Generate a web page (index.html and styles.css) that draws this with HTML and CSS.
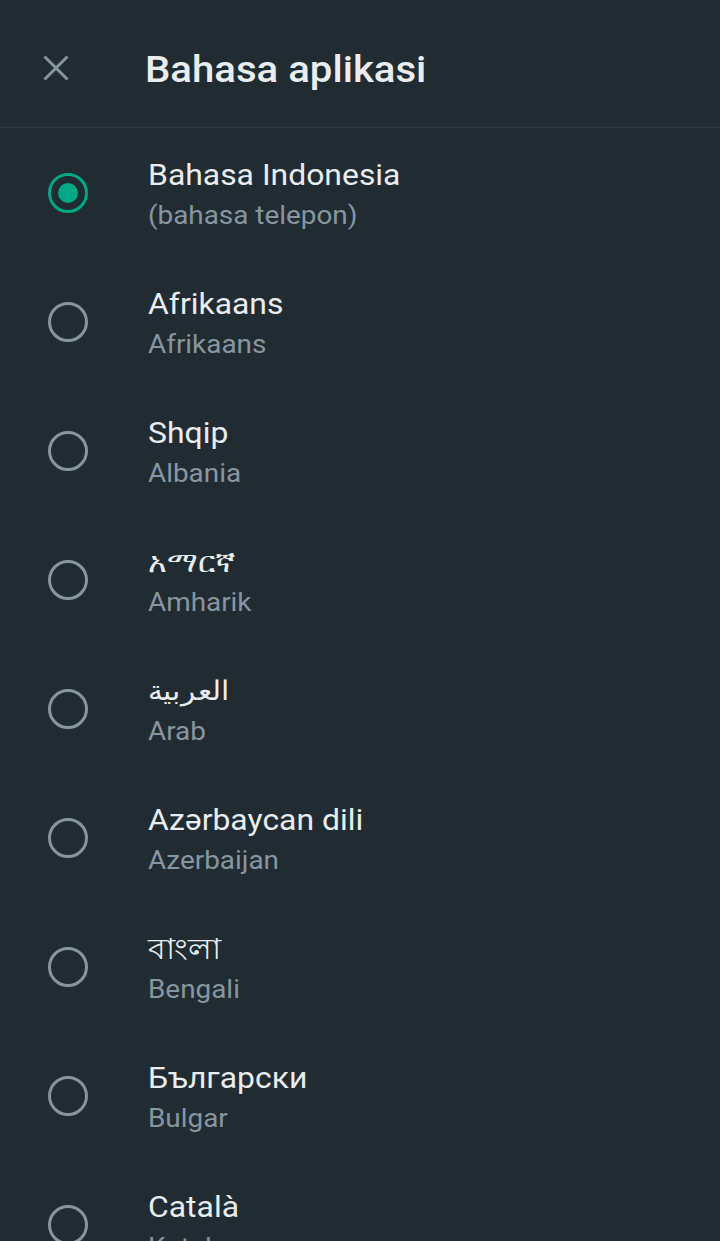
FILE: index.html
```html
<!DOCTYPE html>
<html lang="id">
<head>
<meta charset="utf-8">
<title>Bahasa aplikasi</title>
<link rel="stylesheet" href="styles.css">
</head>
<body>
<header class="topbar">
  <button class="close" aria-label="Tutup">
    <svg viewBox="0 0 26 26" width="26" height="26"><path d="M1.5 1.5 L24.5 24.5 M24.5 1.5 L1.5 24.5" stroke="#8696a0" stroke-width="3" fill="none"/></svg>
  </button>
  <h1 class="title">Bahasa aplikasi</h1>
</header>
<ul class="list">
  <li class="item selected"><span class="radio"></span><div class="texts"><div class="primary">Bahasa Indonesia</div><div class="secondary">(bahasa telepon)</div></div></li>
  <li class="item"><span class="radio"></span><div class="texts"><div class="primary">Afrikaans</div><div class="secondary">Afrikaans</div></div></li>
  <li class="item"><span class="radio"></span><div class="texts"><div class="primary">Shqip</div><div class="secondary">Albania</div></div></li>
  <li class="item"><span class="radio"></span><div class="texts"><div class="primary">አማርኛ</div><div class="secondary">Amharik</div></div></li>
  <li class="item"><span class="radio"></span><div class="texts"><div class="primary arabic">العربية</div><div class="secondary">Arab</div></div></li>
  <li class="item"><span class="radio"></span><div class="texts"><div class="primary">Azərbaycan dili</div><div class="secondary">Azerbaijan</div></div></li>
  <li class="item"><span class="radio"></span><div class="texts"><div class="primary">বাংলা</div><div class="secondary">Bengali</div></div></li>
  <li class="item"><span class="radio"></span><div class="texts"><div class="primary">Български</div><div class="secondary">Bulgar</div></div></li>
  <li class="item"><span class="radio"></span><div class="texts"><div class="primary">Català</div><div class="secondary">Katalan</div></div></li>
</ul>
</body>
</html>
```
FILE: styles.css
```css
html, body {
  margin: 0;
  padding: 0;
  background: #212b32;
  font-family: Roboto, "Noto Sans", "Noto Sans CJK SC", sans-serif;
  color: #e9edef;
  overflow: hidden;
  height: 1241px;
}
.topbar {
  height: 127px;
  border-bottom: 1px solid #2e3a41;
  display: flex;
  align-items: flex-start;
}
.close {
  background: none;
  border: 0;
  padding: 0;
  margin: 55px 0 0 43px;
  width: 26px;
  height: 26px;
  display: flex;
  flex: none;
}
.title {
  margin: 48px 0 0 76px;
  font-size: 37px;
  line-height: 44px;
  font-weight: 500;
  color: #e9edef;
  transform: scaleX(1.085);
  transform-origin: left center;
}
.list {
  list-style: none;
  margin: 0;
  padding: 0;
}
.item {
  height: 129px;
  display: flex;
  align-items: center;
}
.radio {
  width: 40px;
  height: 40px;
  box-sizing: border-box;
  border: 3px solid #8696a0;
  border-radius: 50%;
  margin-left: 48px;
  flex: none;
  position: relative;
}
.selected .radio {
  border-color: #00a884;
}
.selected .radio::after {
  content: "";
  position: absolute;
  left: 7px;
  top: 7px;
  width: 20px;
  height: 20px;
  border-radius: 50%;
  background: #00a884;
}
.texts {
  align-self: flex-start;
  margin: 28px 0 0 60px;
  white-space: nowrap;
}
.primary {
  font-size: 29px;
  line-height: 38px;
  color: #e9edef;
  transform: scaleX(1.1);
  transform-origin: left center;
}
.primary.arabic {
  font-size: 27px;
}
.secondary {
  font-size: 25px;
  line-height: 43px;
  color: #8696a0;
  transform: scaleX(1.115);
  transform-origin: left center;
}
```
